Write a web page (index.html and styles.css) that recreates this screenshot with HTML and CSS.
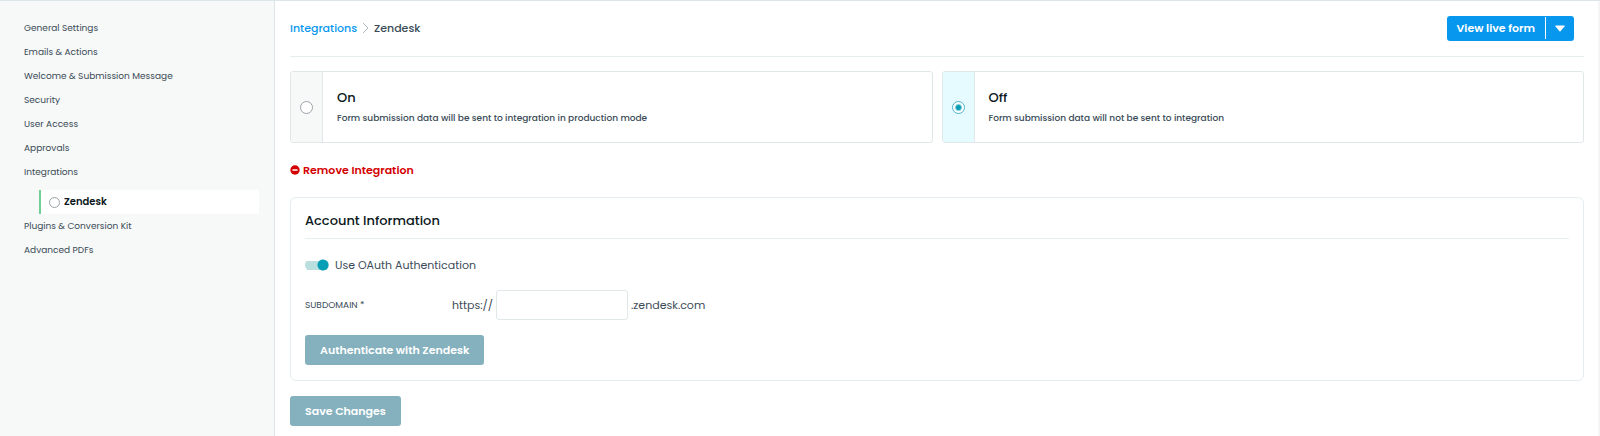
FILE: index.html
```html
<!DOCTYPE html>
<html lang="en">
<head>
  <meta charset="UTF-8" />
  <meta name="viewport" content="width=device-width, initial-scale=1.0"/>
  <title>Zendesk Integration</title>
  <link rel="stylesheet" href="styles.css">
</head>
<body>
  <nav class="sidebar">
    <a href="#">General Settings</a>
    <a href="#">Emails &amp; Actions</a>
    <a href="#">Welcome &amp; Submission Message</a>
    <a href="#">Security</a>
    <a href="#">User Access</a>
    <a href="#">Approvals</a>
    <a href="#">Integrations</a>
    <a href="#" class="sub-item"><span class="status-dot"></span>Zendesk</a>
    <a href="#">Plugins &amp; Conversion Kit</a>
    <a href="#">Advanced PDFs</a>
  </nav>

  <main class="content">
    <header class="top-bar">
      <div class="breadcrumb">
        <a href="#">Integrations</a>
        <svg width="7" height="12" viewBox="0 0 7 12" aria-hidden="true"><path d="M1 1l5 5-5 5" fill="none" stroke="#b4bcc1" stroke-width="1"/></svg>
        <span>Zendesk</span>
      </div>
      <div class="live-form">
        <button type="button">View live form</button>
        <button type="button" class="arrow" aria-label="More options">
          <svg width="10" height="7" viewBox="0 0 10 7" aria-hidden="true"><path d="M.6.5h8.8q.6.2.2.8L5.5 6.2q-.5.5-1 0L.4 1.3Q0 .7.6.5z" fill="#fff"/></svg>
        </button>
      </div>
    </header>

    <div class="options">
      <label class="option">
        <span class="option-radio"><input type="radio" name="status"></span>
        <span class="option-text">
          <span class="option-title">On</span>
          <span class="option-desc">Form submission data will be sent to integration in production mode</span>
        </span>
      </label>
      <label class="option">
        <span class="option-radio"><input type="radio" name="status" checked></span>
        <span class="option-text">
          <span class="option-title">Off</span>
          <span class="option-desc">Form submission data will not be sent to integration</span>
        </span>
      </label>
    </div>

    <a href="#" class="remove">
      <svg width="10" height="10" viewBox="0 0 10 10" aria-hidden="true"><circle cx="5" cy="5" r="4.7" fill="#d40000"/><rect x="2.4" y="4.2" width="5.2" height="1.6" rx=".4" fill="#fff"/></svg>
      Remove Integration
    </a>

    <section class="panel">
      <h2>Account Information</h2>
      <label class="toggle"><input type="checkbox" checked>Use OAuth Authentication</label>
      <div class="field">
        <label for="subdomain">SUBDOMAIN *</label>
        <span>https://</span>
        <input type="text" id="subdomain">
        <span>.zendesk.com</span>
      </div>
      <button type="button" class="btn">Authenticate with Zendesk</button>
    </section>

    <button type="button" class="btn">Save Changes</button>
  </main>
</body>
</html>
```
FILE: styles.css
```css
* {
  box-sizing: border-box;
}
body {
  margin: 0;
  display: flex;
  min-height: 100vh;
  font-family: Poppins, Inter, sans-serif;
  font-size: 11px;
  line-height: 16px;
  color: #3a4b57;
  background: #fff;
  border-top: 1px solid #dce5e8;
}
a {
  color: inherit;
  text-decoration: none;
}
button,
input {
  font-family: inherit;
  margin: 0;
}
button {
  cursor: pointer;
}

.sidebar {
  flex: 0 0 275px;
  padding: 15px 15px 15px 24px;
  background: #f7f9f8;
  border-right: 1px solid #dce5e8;
  font-size: 9px;
}
.sidebar a {
  display: block;
  line-height: 24px;
}
.sidebar .sub-item {
  display: flex;
  align-items: center;
  gap: 4px;
  margin: 6px 0 0 15px;
  padding-left: 8px;
  border-left: 2px solid #6fcf97;
  background: #fff;
  color: #0b1720;
  font-size: 10px;
  font-weight: 600;
}
.status-dot {
  width: 11px;
  height: 11px;
  border: 1px solid #9aa3a8;
  border-radius: 50%;
}

.content {
  flex: 1;
  padding: 0 14px 10px 15px;
  border-right: 2px solid #f5f5f5;
}
.top-bar {
  display: flex;
  justify-content: space-between;
  align-items: center;
  height: 56px;
  padding: 0 10px 1px 0;
  border-bottom: 1px solid #e6eeef;
}
.breadcrumb {
  display: flex;
  align-items: center;
  gap: 5px;
  font-weight: 500;
}
.breadcrumb a {
  color: #0797ee;
}
.live-form {
  display: flex;
  align-items: center;
  height: 25px;
  background: #0797ee;
  border-radius: 3px;
}
.live-form button {
  height: 22px;
  padding: 0 10px;
  border: 0;
  background: none;
  color: #fff;
  font-size: 11px;
  font-weight: 600;
}
.live-form .arrow {
  padding: 0 9px;
  border-left: 1px solid #fff;
}

.options {
  display: grid;
  grid-template-columns: 1fr 1fr;
  gap: 9px;
  margin-top: 14px;
}
.option {
  display: flex;
  height: 72px;
  border: 1px solid #e0e8ea;
  border-radius: 3px;
  overflow: hidden;
}
.option-radio {
  display: flex;
  align-items: center;
  justify-content: center;
  width: 32px;
  background: #f7f9f8;
  border-right: 1px solid #e0e8ea;
}
.option:has(:checked) .option-radio {
  background: #e6fbff;
}
.option input {
  appearance: none;
  width: 13px;
  height: 13px;
  border: 1px solid #9aa3a8;
  border-radius: 50%;
  background: #fff;
}
.option input:checked {
  border-color: #4db6c8;
  background: radial-gradient(circle, #049fb5 0 2px, #fff 4px);
}
.option-text {
  display: flex;
  flex-direction: column;
  justify-content: center;
  gap: 4px;
  padding: 2px 0 0 14px;
}
.option-title {
  color: #0b1720;
  font-size: 13px;
  font-weight: 500;
}
.option-desc {
  font-size: 9px;
  font-weight: 500;
}

.remove {
  display: flex;
  align-items: center;
  gap: 3px;
  margin: 19px 0;
  color: #d40000;
  font-weight: 600;
}

.panel {
  padding: 15px 14px;
  margin-bottom: 15px;
  border: 1px solid #e4eef0;
  border-radius: 6px;
}
.panel h2 {
  margin: 0;
  padding-bottom: 9px;
  border-bottom: 1px solid #e6eeef;
  color: #0b1720;
  font-size: 13px;
  font-weight: 500;
}
.toggle {
  display: flex;
  align-items: center;
  gap: 6px;
  margin-top: 18px;
}
.toggle input {
  appearance: none;
  width: 24px;
  height: 12px;
  border-radius: 6px;
  background:
    radial-gradient(circle at 18px 6px, #049fb5 0 5px, transparent 6px),
    linear-gradient(#b9dfdf, #b9dfdf) 0 2px / 24px 9px no-repeat;
}
.field {
  display: flex;
  align-items: center;
  gap: 3px;
  margin: 17px 0 15px;
}
.field label {
  width: 144px;
  font-size: 9px;
}
.field input {
  width: 132px;
  height: 30px;
  padding: 0 8px;
  border: 1px solid #e0e8ea;
  border-radius: 3px;
}
.btn {
  display: block;
  height: 30px;
  padding: 0 15px;
  border: 0;
  border-radius: 3px;
  background: #85b1be;
  color: #fff;
  font-size: 11px;
  font-weight: 600;
}
```
